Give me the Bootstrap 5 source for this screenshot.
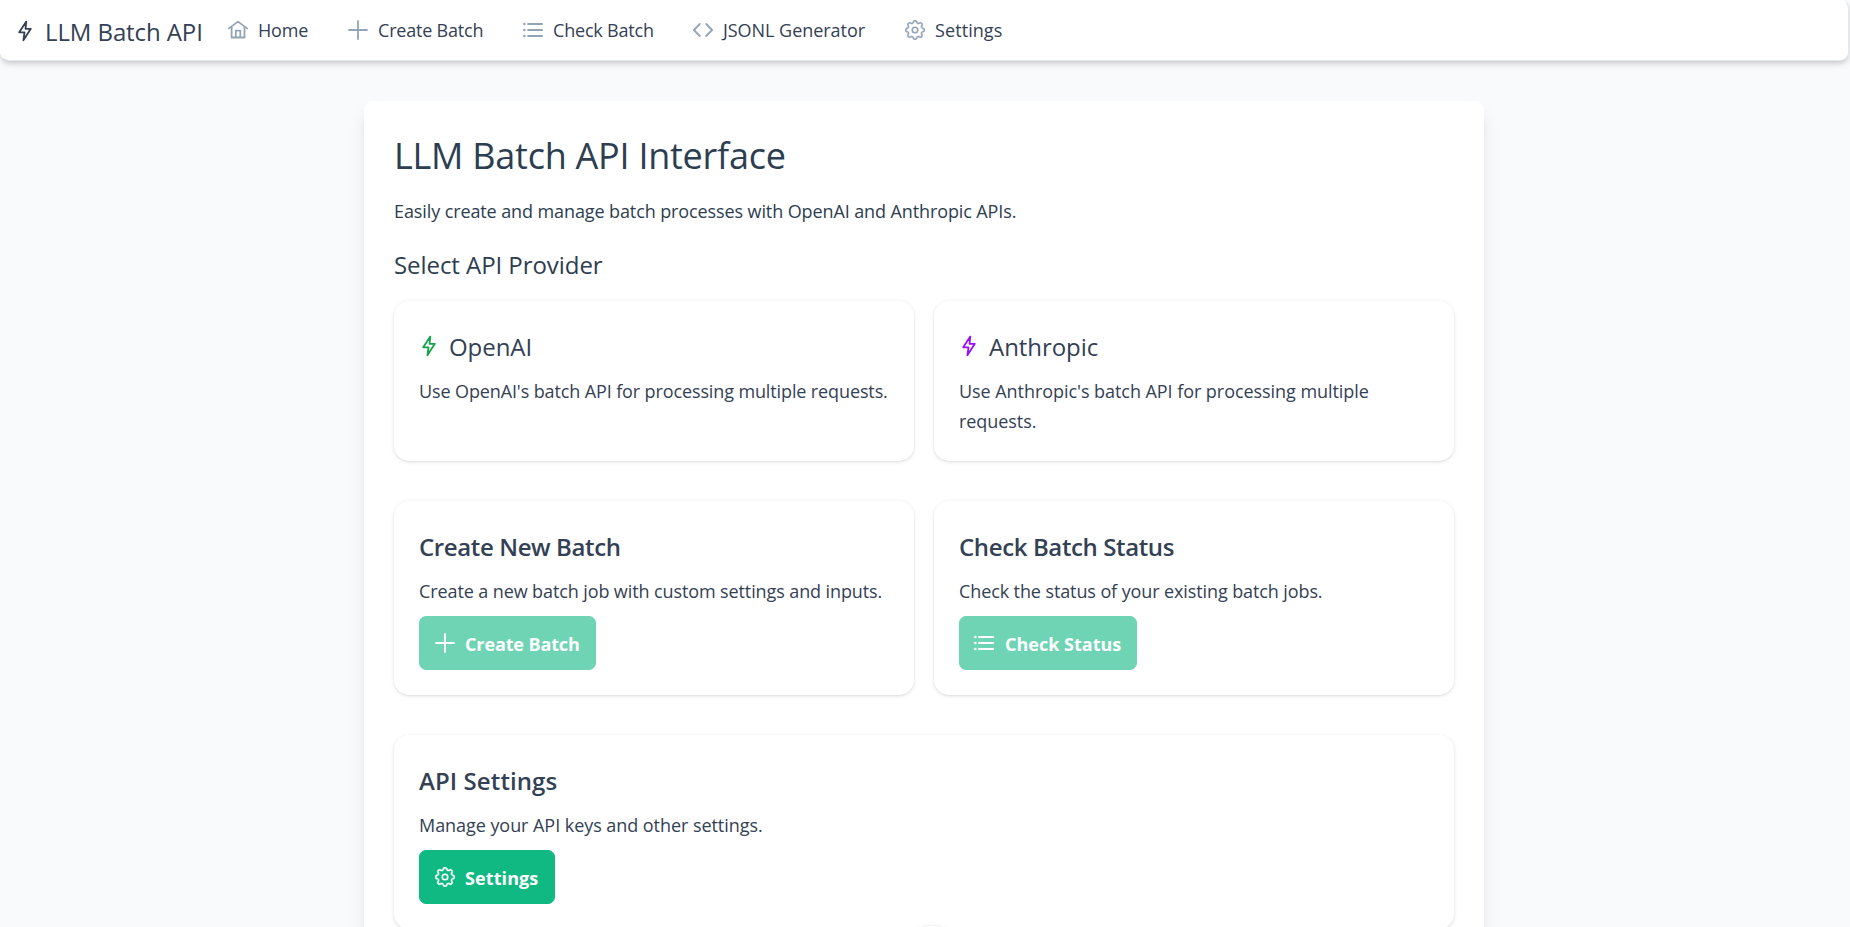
<!doctype html>
<html lang="en">
<head>
<meta charset="utf-8">
<meta name="viewport" content="width=device-width, initial-scale=1">
<title>LLM Batch API</title>
<link href="https://cdn.jsdelivr.net/npm/bootstrap@5.3.0/dist/css/bootstrap.min.css" rel="stylesheet">
<style>
html{overflow:hidden}
body{background:#f8fafc;color:#334155;font-family:"Segoe UI","Open Sans","Noto Sans",sans-serif;font-size:18px;line-height:30px;letter-spacing:-.105px;height:100vh;overflow:hidden;padding-right:2px}
svg{fill:none;stroke:currentColor;stroke-width:1.8;stroke-linecap:round;stroke-linejoin:round;flex:none}
.topbar{height:61px;width:1849px;background:#fff;border:1px solid #e2e8f0;border-top-color:#fff;border-left-color:#fff;border-radius:0 0 9px 9px;border-top-right-radius:8px;box-shadow:0 4px 7px -1px rgba(0,0,0,.13),0 2px 5px -1px rgba(0,0,0,.1)}
.brandname{font-size:24px;letter-spacing:-.1px;line-height:38px;padding-top:3px;margin-left:10px}
.topbar .nav-link{color:#334155;padding:0 0 1px;display:flex;align-items:center;letter-spacing:-.2px;white-space:nowrap}
.topbar .nav-link svg{color:#94a3b8;margin-right:10px}
.brandlink{width:211px;padding-left:14px}
.w-home{width:120px}.w-create{width:175px}.w-check{width:170px}.w-json{width:212px}
.topbar .ls-json{letter-spacing:-.04px}.topbar .ls-set{letter-spacing:.08px}
.panel{width:1120px;margin:40px auto 0;height:1000px;padding:31px 30px;background:#fff;border-radius:9px;box-shadow:0 12px 19px -3px rgba(0,0,0,.1),0 5px 8px -3px rgba(0,0,0,.06);color:#2c3e50}
.panel h1{font-size:36px;font-weight:400;line-height:47px;letter-spacing:-.25px;margin:0 0 17px}
.panel h2{font-size:24px;font-weight:400;line-height:30px;letter-spacing:-.06px;margin:24px 0 21px}
.tiles{display:grid;grid-template-columns:1fr 1fr;gap:40px 20px}
.tile{border:0;border-radius:15px;padding:25px;color:#334155;background:#fff;box-shadow:0 1px 4px rgba(0,0,0,.1),0 1px 2px rgba(0,0,0,.06)}
.tile h3{display:flex;align-items:center;height:40px;font-size:24px;font-weight:400;letter-spacing:-.06px;line-height:40px;margin:0 0 10px}
.tile h3 span{margin-left:2px}
.tile h3 svg{margin-top:-1px}
.tile h3.strongish{font-weight:600;letter-spacing:-.38px}
.tile h3.strongish,.tile h3 span{padding-top:2px}
.tile h3.ls0{letter-spacing:-.05px}
.tile h3.ls1,.tile .ls1{letter-spacing:.1px}
.tile p{margin:0}
.tile .ls04{letter-spacing:-.055px}
.tile .ls12{letter-spacing:-.12px}
.act{--bs-btn-color:#fff;--bs-btn-bg:#10b981;--bs-btn-border-color:#10b981;--bs-btn-disabled-color:#fff;--bs-btn-disabled-bg:#10b981;--bs-btn-disabled-border-color:#10b981;--bs-btn-disabled-opacity:.6;display:flex;align-items:center;height:54px;margin-top:10px;padding:2px 0 0 15px;border-radius:7px;font-size:18px;font-weight:700;letter-spacing:-.12px;gap:10px;white-space:nowrap}
.act svg{margin-top:-3px;stroke-width:1.9}
.b-create{width:177px}.b-check{width:178px;letter-spacing:0;padding-left:14px;gap:11px}.b-set{width:136px}
.grn{color:#16a34a}.pur{color:#9810fa}
.dock{left:907px;top:926px;width:50px;height:50px;border-radius:25px;background:#fff;box-shadow:0 0 4px rgba(0,0,0,.12)}
</style>
<script src="https://cdn.jsdelivr.net/npm/bootstrap@5.3.0/dist/js/bootstrap.bundle.min.js"></script>
</head>
<body>
<svg class="d-none">
<symbol id="bolt" viewBox="0 0 20 22"><path d="M11.3 1.6 4.2 12.3h5.3L8.4 20.3l7.4-11.5h-5.3z"/></symbol>
<symbol id="house" viewBox="0 0 20 20"><path d="M.9 8.4 10 1.6l9.1 6.8M3.6 6.6v10.9h12.9V6.6M7.8 17.3v-6.7h4.5v6.7"/></symbol>
<symbol id="plus" viewBox="0 0 20 20"><path d="M10 1v18M1 10h18"/></symbol>
<symbol id="list" viewBox="0 0 20 20"><path d="M5 4h14.2M5 10h14.2M5 16h14.2"/><path stroke-width="2.4" d="M1.3 4h.1M1.3 10h.1M1.3 16h.1"/></symbol>
<symbol id="code" viewBox="0 0 20 20"><path d="M6.8 4 .9 10l5.9 6M13.2 4l5.9 6-5.9 6"/></symbol>
<symbol id="gear" viewBox="0 0 16 16"><circle cx="8" cy="8" r="2.2" stroke-width="1.3"/><path fill="currentColor" stroke="currentColor" stroke-width=".4" d="M9.796 1.343c-.527-1.79-3.065-1.79-3.592 0l-.094.319a.873.873 0 0 1-1.255.52l-.292-.16c-1.64-.892-3.433.902-2.54 2.541l.159.292a.873.873 0 0 1-.52 1.255l-.319.094c-1.79.527-1.79 3.065 0 3.592l.319.094a.873.873 0 0 1 .52 1.255l-.16.292c-.892 1.64.901 3.434 2.541 2.54l.292-.159a.873.873 0 0 1 1.255.52l.094.319c.527 1.79 3.065 1.79 3.592 0l.094-.319a.873.873 0 0 1 1.255-.52l.292.16c1.64.893 3.434-.902 2.54-2.541l-.159-.292a.873.873 0 0 1 .52-1.255l.319-.094c1.79-.527 1.79-3.065 0-3.592l-.319-.094a.873.873 0 0 1-.52-1.255l.16-.292c.893-1.64-.902-3.433-2.541-2.54l-.292.159a.873.873 0 0 1-1.255-.52zm-2.633.283c.246-.835 1.428-.835 1.674 0l.094.319a1.873 1.873 0 0 0 2.693 1.115l.291-.16c.764-.415 1.6.42 1.184 1.185l-.159.292a1.873 1.873 0 0 0 1.116 2.692l.318.094c.835.246.835 1.428 0 1.674l-.319.094a1.873 1.873 0 0 0-1.115 2.693l.16.291c.415.764-.42 1.6-1.185 1.184l-.291-.159a1.873 1.873 0 0 0-2.693 1.116l-.094.318c-.246.835-1.428.835-1.674 0l-.094-.319a1.873 1.873 0 0 0-2.692-1.115l-.292.16c-.764.415-1.6-.42-1.184-1.185l.159-.291A1.873 1.873 0 0 0 1.945 8.93l-.319-.094c-.835-.246-.835-1.428 0-1.674l.319-.094A1.873 1.873 0 0 0 3.06 4.377l-.16-.292c-.415-.764.42-1.6 1.185-1.184l.292.159a1.873 1.873 0 0 0 2.692-1.115z"/></symbol>
</svg>
<nav class="topbar d-flex align-items-center">
<a class="brandlink d-flex align-items-center text-reset text-decoration-none" href="#"><svg width="20" height="22"><use href="#bolt"/></svg><span class="brandname text-nowrap">LLM Batch API</span></a>
<ul class="nav flex-nowrap ms-3 ps-0">
<li class="w-home"><a class="nav-link" href="#"><svg width="20" height="20"><use href="#house"/></svg>Home</a></li>
<li class="w-create"><a class="nav-link" href="#"><svg width="20" height="20"><use href="#plus"/></svg>Create Batch</a></li>
<li class="w-check"><a class="nav-link" href="#"><svg width="20" height="20"><use href="#list"/></svg>Check Batch</a></li>
<li class="w-json"><a class="nav-link ls-json" href="#"><svg width="20" height="20"><use href="#code"/></svg>JSONL Generator</a></li>
<li><a class="nav-link ls-set" href="#"><svg width="20" height="20"><use href="#gear"/></svg>Settings</a></li>
</ul>
</nav>
<main class="panel">
<h1>LLM Batch API Interface</h1>
<p class="m-0">Easily create and manage batch processes with OpenAI and Anthropic APIs.</p>
<h2>Select API Provider</h2>
<div class="tiles">
<section class="card tile"><h3><svg class="grn me-2" width="20" height="22"><use href="#bolt"/></svg><span>OpenAI</span></h3><p class="ls12">Use OpenAI's batch API for processing multiple requests.</p></section>
<section class="card tile"><h3 class="ls0"><svg class="pur me-2" width="20" height="22"><use href="#bolt"/></svg><span>Anthropic</span></h3><p class="ls04">Use Anthropic's batch API for processing multiple requests.</p></section>
<section class="card tile"><h3 class="strongish">Create New Batch</h3><p>Create a new batch job with custom settings and inputs.</p><button class="btn act b-create" disabled><svg width="20" height="20"><use href="#plus"/></svg>Create Batch</button></section>
<section class="card tile"><h3 class="strongish">Check Batch Status</h3><p>Check the status of your existing batch jobs.</p><button class="btn act b-check" disabled><svg width="20" height="20"><use href="#list"/></svg>Check Status</button></section>
<section class="card tile" style="grid-column:1/-1"><h3 class="strongish ls1">API Settings</h3><p class="ls04">Manage your API keys and other settings.</p><button class="btn act b-set ls1"><svg width="20" height="20"><use href="#gear"/></svg>Settings</button></section>
</div>
</main>
<div class="dock position-fixed"></div>
</body>
</html>
